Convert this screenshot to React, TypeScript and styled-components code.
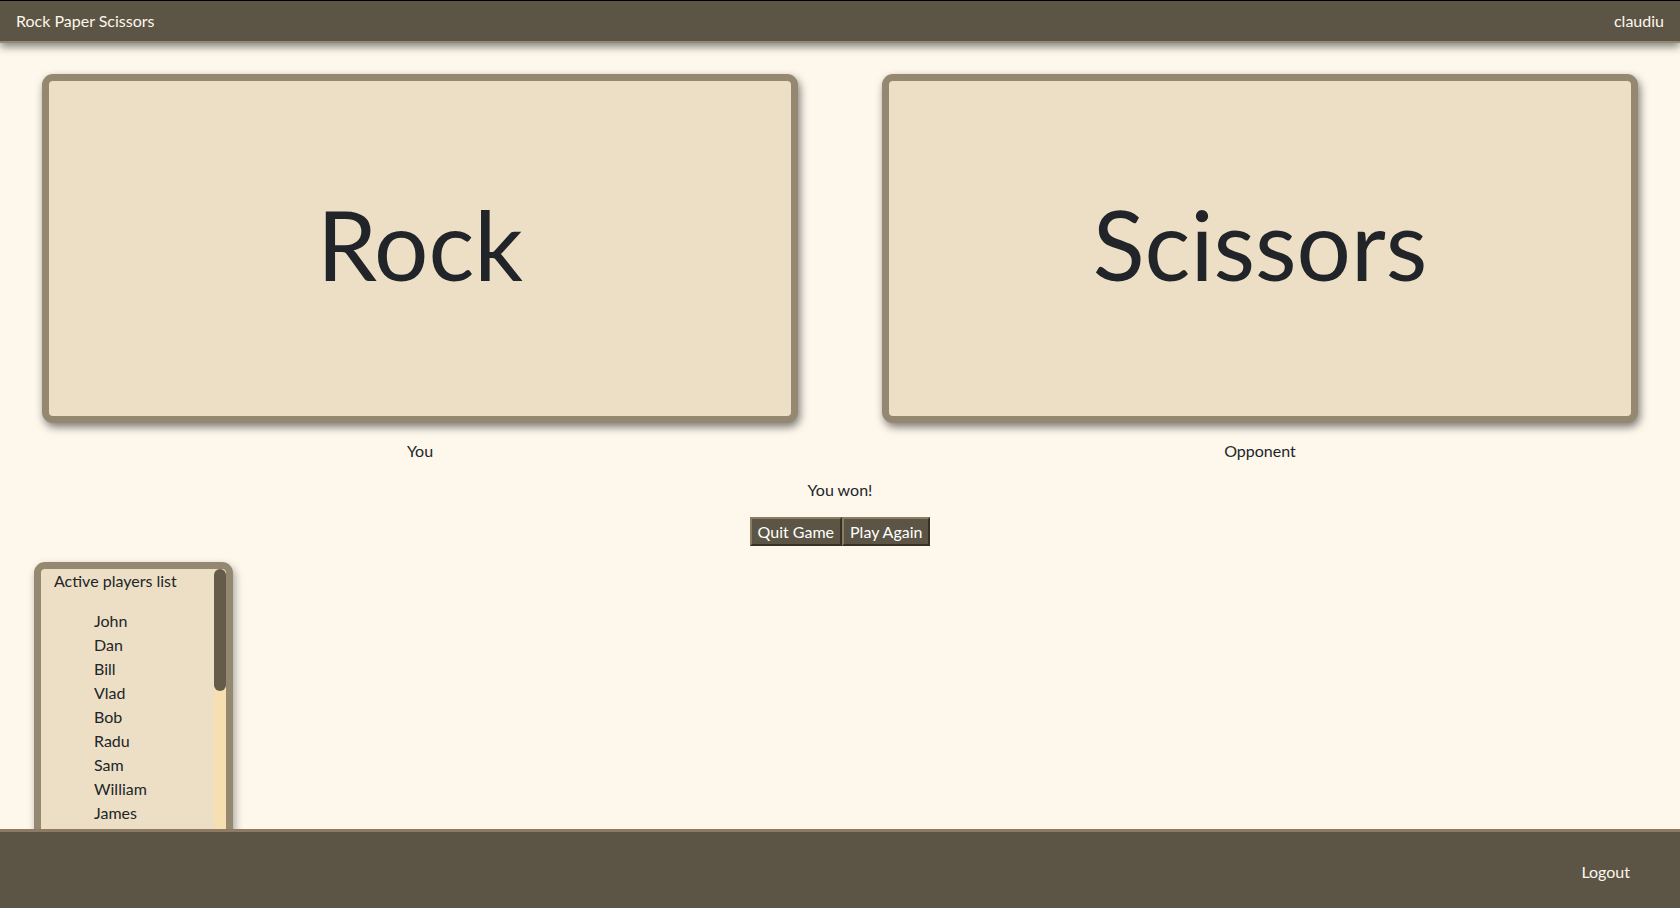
import styled, { createGlobalStyle } from 'styled-components'

const players = [
    'John', 'Dan', 'Bill', 'Vlad', 'Bob', 'Radu', 'Sam', 'William', 'James',
    'Mike', 'Alex', 'George', 'Paul', 'Ana', 'Maria', 'Ion', 'Tom', 'Eric', 'Mark', 'Chris',
]

export default function App() {
    return (
        <>
            <GlobalStyle />
            <Header>
                <Brand>Rock Paper Scissors</Brand>
                <User>claudiu</User>
            </Header>
            <Main>
                <Board>
                    <Side>
                        <Card>
                            <Choice>Rock</Choice>
                        </Card>
                        <Label>You</Label>
                    </Side>
                    <Side>
                        <Card>
                            <Choice>Scissors</Choice>
                        </Card>
                        <Label>Opponent</Label>
                    </Side>
                </Board>
                <Result>You won!</Result>
                <Actions>
                    <Button>Quit Game</Button>
                    <Button>Play Again</Button>
                </Actions>
                <PlayersBox>
                    <PlayersScroll>
                        <PlayersTitle>Active players list</PlayersTitle>
                        <PlayersUl>
                            {players.map((name) => (
                                <li key={name}>{name}</li>
                            ))}
                        </PlayersUl>
                    </PlayersScroll>
                    <ScrollTrack>
                        <ScrollThumb />
                    </ScrollTrack>
                </PlayersBox>
            </Main>
            <Footer>
                <FooterLink>Logout</FooterLink>
            </Footer>
        </>
    )
}

const GlobalStyle = createGlobalStyle`
    html, body {
        margin: 0;
        padding: 0;
        background: #fdf7ec;
        color: #212529;
        font-family: "Segoe UI", Lato, "Noto Sans", sans-serif;
        font-size: 16px;
        line-height: 24px;
        overflow: hidden;
    }
`

const Header = styled.header`
    height: 40px;
    display: flex;
    align-items: center;
    justify-content: space-between;
    padding: 0 16px;
    background: #5c5545;
    border-top: 1px solid #000;
    border-bottom: 2px solid #958870;
    box-shadow: 0 4px 8px rgba(0, 0, 0, 0.45);
    color: #fdf7ec;
    position: relative;
    z-index: 2;
`

const Brand = styled.span`
    font-size: 16px;
`

const User = styled.span`
    font-size: 16px;
`

const Main = styled.main`
    padding-top: 31px;
`

const Board = styled.div`
    display: grid;
    grid-template-columns: 1fr 1fr;
`

const Side = styled.div`
    display: flex;
    flex-direction: column;
    align-items: center;
`

const Card = styled.div`
    width: 90%;
    height: 349px;
    box-sizing: border-box;
    display: flex;
    align-items: center;
    justify-content: center;
    background: #ecdfc5;
    border: 7px solid #958870;
    border-radius: 11px;
    box-shadow: 2px 4px 8px rgba(0, 0, 0, 0.5);
`

const Choice = styled.span`
    font-size: 96px;
    line-height: 1;
    margin-bottom: 9px;
    color: #212529;
`

const Label = styled.div`
    margin-top: 16px;
`

const Result = styled.div`
    margin-top: 15px;
    text-align: center;
`

const Actions = styled.div`
    margin-top: 15px;
    display: flex;
    justify-content: center;
`

const Button = styled.button`
    font-family: inherit;
    font-size: 16px;
    line-height: 23px;
    padding: 1px 6px;
    background: #5c5545;
    color: #fff;
    border: 2px outset #8a7d62;
    cursor: pointer;
`

const PlayersBox = styled.div`
    margin: 16px 0 0 34px;
    width: 199px;
    height: 284px;
    box-sizing: border-box;
    display: flex;
    background: #ecdfc5;
    border: 7px solid #958870;
    border-radius: 11px;
    box-shadow: 2px 4px 8px rgba(0, 0, 0, 0.35);
    overflow: hidden;
`

const PlayersScroll = styled.div`
    flex: 1;
    overflow: hidden;
`

const ScrollTrack = styled.div`
    width: 12px;
    flex-shrink: 0;
    background: #f6e0b2;
    border-radius: 6px;
`

const ScrollThumb = styled.div`
    height: 122px;
    background: #645b4b;
    border-radius: 6px;
`

const PlayersTitle = styled.div`
    padding-left: 13px;
`

const PlayersUl = styled.ul`
    margin: 16px 0;
    padding-left: 53px;
    list-style: none;
`

const Footer = styled.footer`
    position: fixed;
    left: 0;
    right: 0;
    bottom: 0;
    height: 76px;
    display: flex;
    align-items: center;
    justify-content: flex-end;
    padding: 0 50px;
    background: #5c5545;
    border-top: 3px solid #8c7b62;
    z-index: 3;
`

const FooterLink = styled.a`
    color: #fdf7ec;
    margin-top: 3px;
`
